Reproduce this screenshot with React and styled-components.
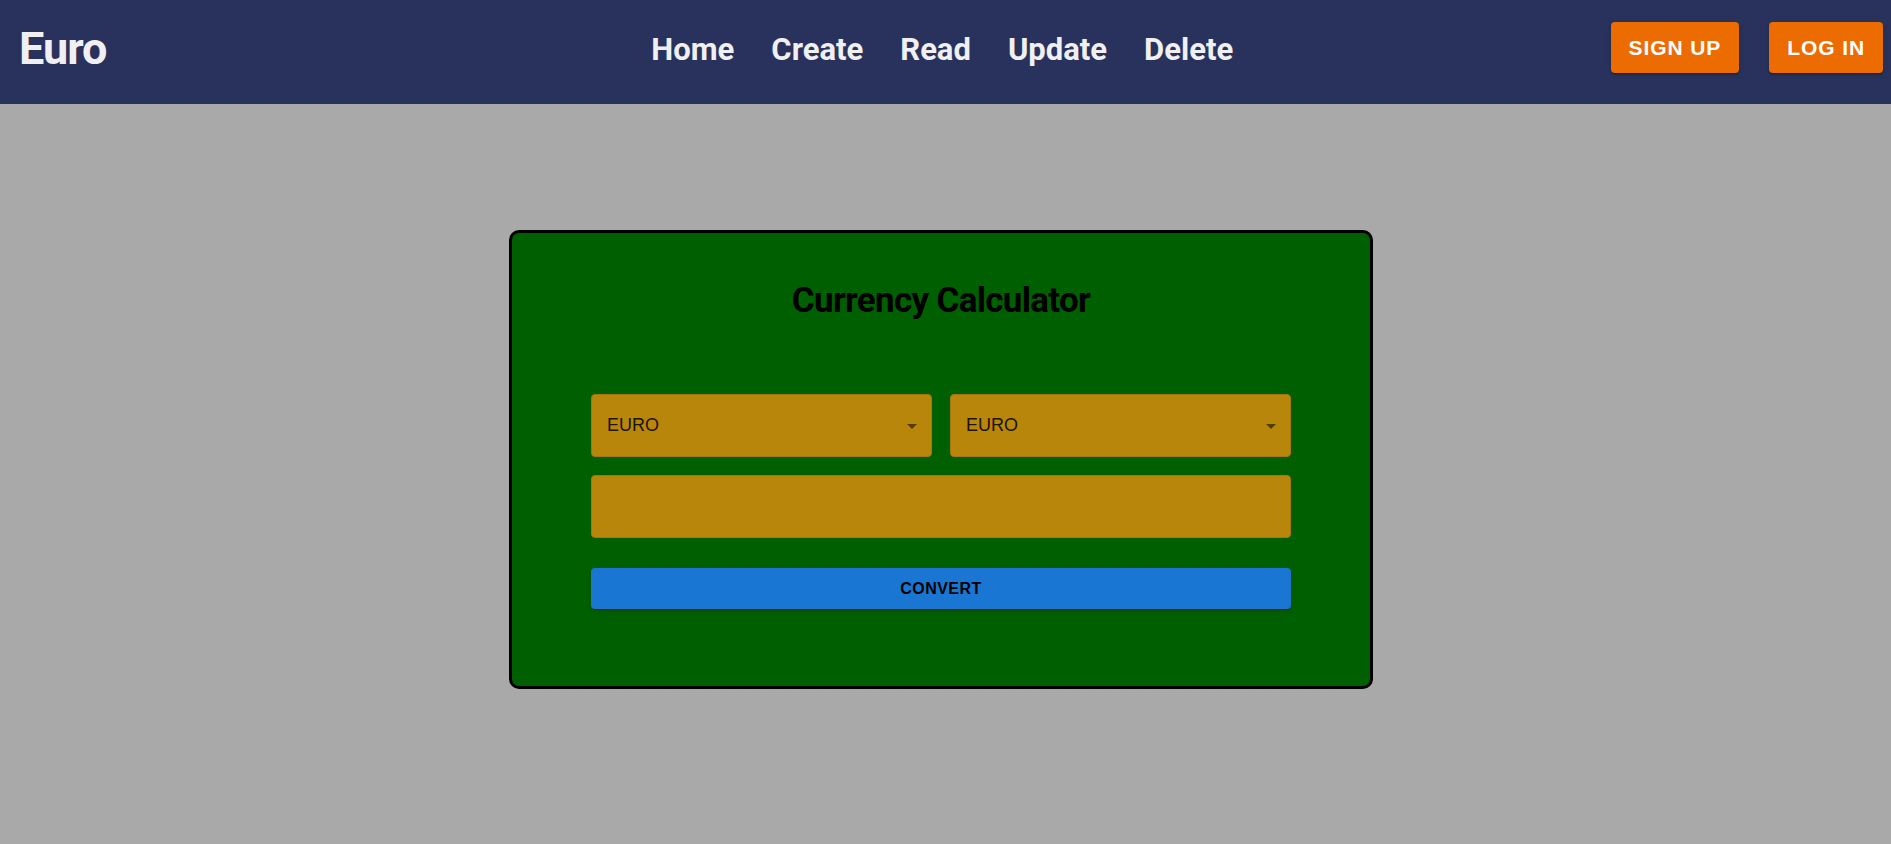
import React from "react";
import styled, { createGlobalStyle } from "styled-components";

const GlobalStyle = createGlobalStyle`
  html, body {
    margin: 0;
    padding: 0;
  }
  body {
    background: #a9a9a9;
    font-family: "Liberation Sans", Arial, sans-serif;
  }
  * { box-sizing: border-box; }
`;

const Page = styled.div`
  min-height: 100vh;
  background: #a9a9a9;
`;

const Header = styled.header`
  height: 104px;
  background: #29325c;
  display: flex;
  align-items: center;
  padding: 0 8px 0 19px;
`;

const Logo = styled.div`
  font-family: Roboto, "Open Sans", sans-serif;
  font-weight: 700;
  font-size: 45px;
  letter-spacing: -1px;
  color: #f0f0f2;
  line-height: 1;
  padding-bottom: 7px;
`;

const Nav = styled.nav`
  display: flex;
  gap: 37px;
  margin-left: 545px;
  padding-bottom: 6px;
`;

const NavLink = styled.a`
  font-family: Roboto, "Open Sans", sans-serif;
  font-weight: 700;
  font-size: 31px;
  color: #f0f0f2;
  text-decoration: none;
  line-height: 1;
  cursor: pointer;
`;

const Actions = styled.div`
  margin-left: auto;
  display: flex;
  gap: 30px;
  margin-top: -9px;
`;

const HeaderButton = styled.button`
  height: 51px;
  padding: 0 18px;
  border: none;
  border-radius: 4px;
  background: #ed6c02;
  color: #ffffff;
  font-family: "Liberation Sans", Arial, sans-serif;
  font-weight: 700;
  font-size: 21px;
  letter-spacing: 0.9px;
  text-transform: uppercase;
  box-shadow: 0px 3px 1px -2px rgba(0,0,0,0.2), 0px 2px 2px 0px rgba(0,0,0,0.14), 0px 1px 5px 0px rgba(0,0,0,0.12);
  cursor: pointer;
`;

const Main = styled.main`
  display: flex;
  justify-content: center;
  padding: 126px 0 0 0;
`;

const Card = styled.section`
  width: 864px;
  border: 3px solid #000;
  border-radius: 10px;
  background: #005f00;
  padding: 47px 79px 77px;
  display: flex;
  flex-direction: column;
  margin-right: 9px;
`;

const Title = styled.h1`
  margin: 0 0 72px;
  text-align: center;
  font-family: Roboto, "Open Sans", sans-serif;
  font-weight: 700;
  font-size: 35px;
  letter-spacing: -0.7px;
  line-height: 42px;
  color: #000;
`;

const Row = styled.div`
  display: flex;
  gap: 18px;
  margin-bottom: 18px;
`;

const Field = styled.div`
  position: relative;
  flex: 1;
  height: 63px;
  background: #b8860b;
  border: 1px solid #a57708;
  border-radius: 4px;
  display: flex;
  align-items: center;
  padding: 0 16px 0 15px;
  font-family: "Liberation Sans", Arial, sans-serif;
  font-size: 18px;
  color: rgba(0,0,0,0.87);
`;

const Arrow = styled.svg`
  position: absolute;
  right: 7px;
  top: 50%;
  margin-top: -12px;
  width: 24px;
  height: 24px;
  fill: rgba(0,0,0,0.54);
`;

const ConvertButton = styled.button`
  margin-top: 12px;
  height: 41px;
  border: none;
  border-radius: 4px;
  background: #1976d2;
  color: #000;
  font-family: "Liberation Sans", Arial, sans-serif;
  font-weight: 700;
  font-size: 16px;
  letter-spacing: 0.45px;
  text-transform: uppercase;
  box-shadow: 0px 3px 1px -2px rgba(0,0,0,0.2), 0px 2px 2px 0px rgba(0,0,0,0.14), 0px 1px 5px 0px rgba(0,0,0,0.12);
  cursor: pointer;
`;

const Select = ({ value }) => (
  <Field>
    {value}
    <Arrow viewBox="0 0 24 24">
      <path d="M7 10l5 5 5-5z" />
    </Arrow>
  </Field>
);

export default function App() {
  return (
    <Page>
      <GlobalStyle />
      <Header>
        <Logo>Euro</Logo>
        <Nav>
          <NavLink>Home</NavLink>
          <NavLink>Create</NavLink>
          <NavLink>Read</NavLink>
          <NavLink>Update</NavLink>
          <NavLink>Delete</NavLink>
        </Nav>
        <Actions>
          <HeaderButton>Sign up</HeaderButton>
          <HeaderButton>Log in</HeaderButton>
        </Actions>
      </Header>
      <Main>
        <Card>
          <Title>Currency Calculator</Title>
          <Row>
            <Select value="EURO" />
            <Select value="EURO" />
          </Row>
          <Row>
            <Field />
          </Row>
          <ConvertButton>Convert</ConvertButton>
        </Card>
      </Main>
    </Page>
  );
}
